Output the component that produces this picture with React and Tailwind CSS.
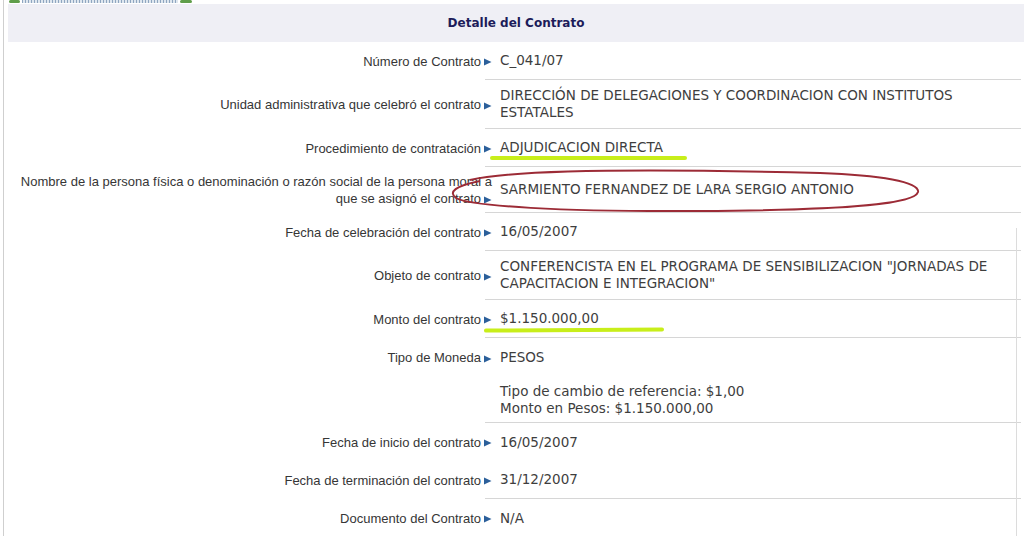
import React from "react";

const rows = [
  { label: "Número de Contrato", value: ["C_041/07"] },
  {
    label: "Unidad administrativa que celebró el contrato",
    value: ["DIRECCIÓN DE DELEGACIONES Y COORDINACION CON INSTITUTOS", "ESTATALES"],
  },
  { label: "Procedimiento de contratación", value: ["ADJUDICACION DIRECTA"] },
  {
    label: "Nombre de la persona física o denominación o razón social de la persona moral a que se asignó el contrato",
    value: ["SARMIENTO FERNANDEZ DE LARA SERGIO ANTONIO"],
  },
  { label: "Fecha de celebración del contrato", value: ["16/05/2007"] },
  {
    label: "Objeto de contrato",
    value: ['CONFERENCISTA EN EL PROGRAMA DE SENSIBILIZACION "JORNADAS DE', 'CAPACITACION E INTEGRACION"'],
  },
  { label: "Monto del contrato", value: ["$1.150.000,00"] },
  {
    label: "Tipo de Moneda",
    value: ["PESOS", "\u00a0", "Tipo de cambio de referencia: $1,00", "Monto en Pesos: $1.150.000,00"],
    top: true,
  },
  { label: "Fecha de inicio del contrato", value: ["16/05/2007"], noLine: true },
  { label: "Fecha de terminación del contrato", value: ["31/12/2007"] },
  { label: "Documento del Contrato", value: ["N/A"], noLine: true },
];

function Arrow() {
  return (
    <svg width="8" height="8" viewBox="0 0 8 8" className="inline-block ml-[3px]">
      <path d="M0 0.5 L7.5 4 L0 7.5 Z" fill="#2b5f9a" />
    </svg>
  );
}

function Row({ row }) {
  return (
    <div className={`flex ${row.top ? "items-start" : "items-stretch"}`}>
      <div
        className={`w-[484px] shrink-0 flex flex-col justify-center text-right text-[13px] leading-[17px] text-[#363636] font-['Liberation_Sans',Arial,sans-serif] ${
          row.top ? "pt-[11px]" : "py-[6px]"
        }`}
      >
        <div>
          {row.label}
          <Arrow />
        </div>
      </div>
      <div
        className={`flex-1 ml-[-7px] pl-[15px] min-h-[38px] flex flex-col justify-center ${
          row.top ? "pt-[11px] pb-[5px]" : "py-[7px]"
        } ${row.noLine ? "" : "border-b border-[#d6d6d6]"}`}
      >
        {row.value.map((v, i) => (
          <div key={i} className="text-[13.5px] leading-[17px] text-[#3e3e3e] font-['DejaVu_Sans',Verdana,sans-serif] whitespace-nowrap">
            {v}
          </div>
        ))}
      </div>
    </div>
  );
}

export default function App() {
  return (
    <div className="w-[1024px] h-[536px] overflow-hidden bg-white relative">
      <div className="ml-[3px] h-[536px] border-l border-[#cfcfcf] pl-[4px]">
        {/* tira decorativa superior */}
        <div className="flex items-start h-[4px] ml-[1px] w-[183px]">
          <div className="w-[11px] h-[3px] bg-[#5f9e4a] rounded-sm" />
          <div className="flex-1 h-[3px] mx-[2px] bg-[repeating-linear-gradient(90deg,#8fa6c0_0px,#8fa6c0_1px,#dfe7ef_1px,#dfe7ef_3px)]" />
          <div className="w-[12px] h-[3px] bg-[#5f9e4a] rounded-sm" />
        </div>

        <div className="h-[38px] bg-[#efeff5] flex items-center justify-center">
          <span className="text-[12px] font-bold text-[#1c1c5a] font-['DejaVu_Sans',Verdana,sans-serif]">
            Detalle del Contrato
          </span>
        </div>

        <div className="w-[1013px]">
          {rows.map((r, i) => (
            <Row key={i} row={r} />
          ))}
        </div>
      </div>

      {/* borde derecho del marco */}
      <div className="absolute left-[1016px] top-[228px] bottom-0 w-px bg-[#dcdcdc]" />

      {/* anotaciones */}
      <div className="absolute left-[490px] top-[156px] w-[197px] h-[4px] bg-[#c8ee1a] rounded-full" />
      <div className="absolute left-[484px] top-[328px] w-[180px] h-[4px] bg-[#c8ee1a] rounded-full -rotate-[0.4deg]" />
      <svg className="absolute left-0 top-0 pointer-events-none" width="1024" height="536">
        <path
          d="M470 180 C 520 168, 700 170, 820 173 C 880 175, 920 182, 918 192 C 915 203, 860 210, 700 211 C 560 212, 470 206, 456 198 C 448 192, 455 186, 480 181"
          fill="none"
          stroke="#9c2b36"
          strokeWidth="2"
        />
      </svg>
    </div>
  );
}
